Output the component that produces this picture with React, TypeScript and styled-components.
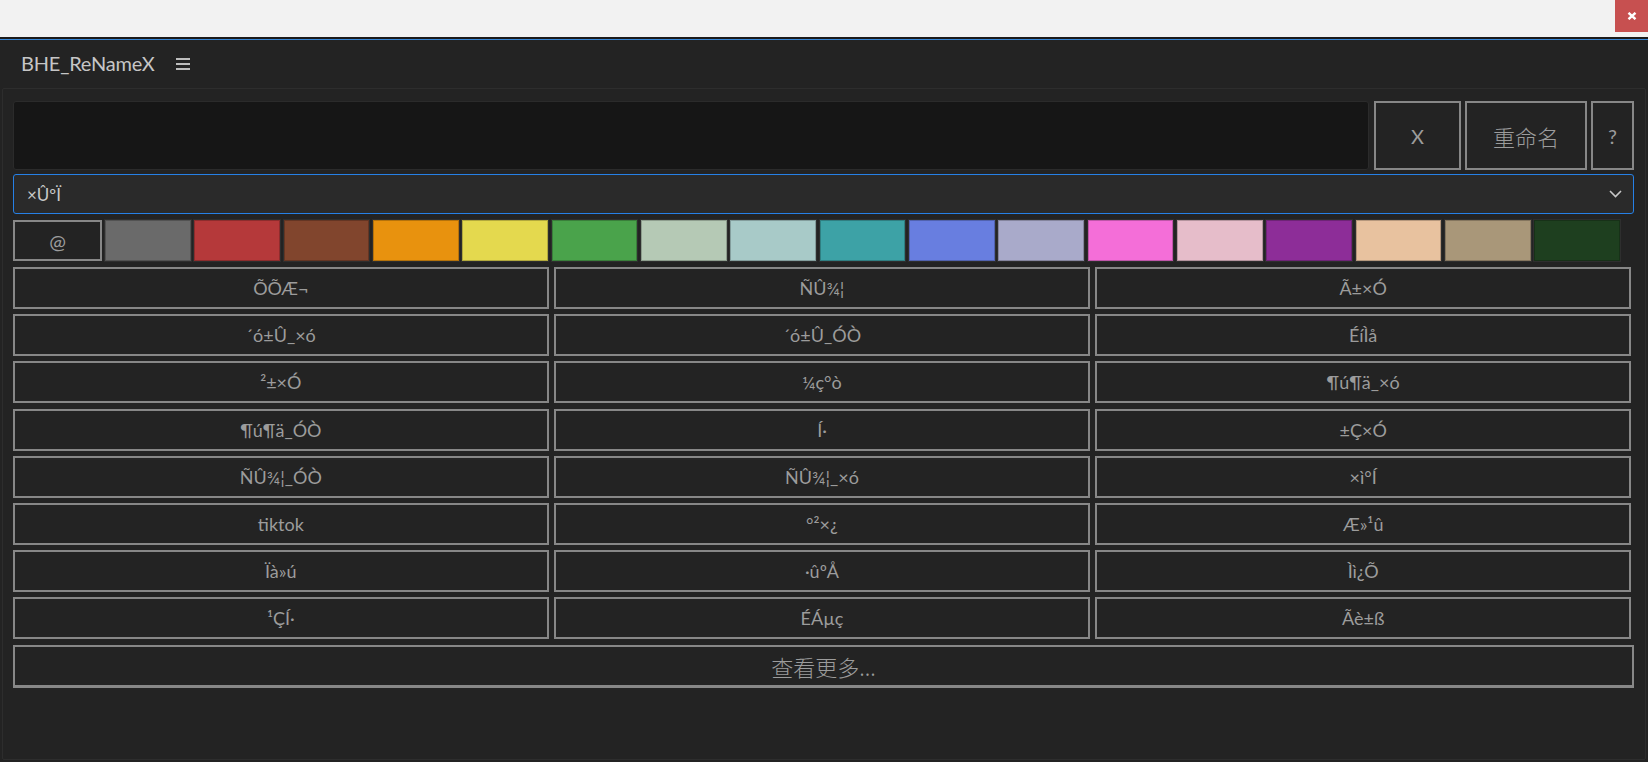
import styled, { createGlobalStyle } from "styled-components";

const GlobalStyle = createGlobalStyle`
  html, body {
    margin: 0;
    padding: 0;
    background: #232323;
  }
  body {
    font-family: Lato, "Noto Sans", "Noto Sans CJK SC", sans-serif;
  }
  * {
    box-sizing: border-box;
  }
`;

const Page = styled.div`
  display: flex;
  flex-direction: column;
  width: 1648px;
  height: 762px;
  overflow: hidden;
  background: #232323;
`;

const TitleBar = styled.div`
  display: flex;
  justify-content: flex-end;
  align-items: flex-start;
  height: 39px;
  background: #f2f2f2;
  border-bottom: 2px solid #1b1b1b;
  flex-shrink: 0;
`;

const CloseButton = styled.div`
  display: flex;
  align-items: center;
  justify-content: center;
  width: 33px;
  height: 32px;
  background: #c75050;
`;

const Header = styled.div`
  display: flex;
  align-items: center;
  gap: 22px;
  height: 49px;
  padding: 0 0 2px 21px;
  border-top: 1px solid #3a87d6;
  flex-shrink: 0;
`;

const Title = styled.span`
  font-size: 20px;
  color: #c6c6c6;
  letter-spacing: -0.2px;
`;

const Hamburger = styled.div`
  display: flex;
  flex-direction: column;
  gap: 3px;
  width: 14px;
  margin-top: 2px;

  span {
    display: block;
    height: 2px;
    background: #bdbdbd;
  }
`;

const Panel = styled.div`
  flex: 1;
  display: flex;
  flex-direction: column;
  margin: 0 2px 2px 2px;
  padding: 12px 11px 0 10px;
  border: 1px solid #2d2d2d;
  border-radius: 2px;
  background: #232323;
`;

const TopRow = styled.div`
  display: flex;
  gap: 4px;
  height: 69px;
`;

const NameInput = styled.div`
  flex: 1;
  margin-right: 1px;
  background: #161616;
  border: 1px solid #2b2b2b;
  border-radius: 3px;
`;

const ActionButton = styled.div<{ $w: number; $cjk?: boolean }>`
  display: flex;
  align-items: center;
  justify-content: center;
  width: ${(p) => p.$w}px;
  border: 2px solid #878787;
  color: #9c9c9c;
  font-size: ${(p) => (p.$cjk ? 22 : 20)}px;
  font-family: ${(p) =>
    p.$cjk ? `"Noto Sans CJK SC", sans-serif` : `Lato, "Noto Sans", sans-serif`};
  font-weight: ${(p) => (p.$cjk ? 300 : 400)};
`;

const SelectBox = styled.div`
  display: flex;
  align-items: center;
  justify-content: space-between;
  height: 40px;
  margin-top: 4px;
  padding: 0 11px 0 13px;
  background: #2a2a2a;
  border: 1px solid #2680e6;
  border-radius: 3px;
  color: #c8c8c8;
  font-size: 17px;
`;

const ColorRow = styled.div`
  display: flex;
  gap: 3.6px;
  height: 41px;
  margin-top: 6px;
  margin-right: 14px;
`;

const AtButton = styled.div`
  display: flex;
  align-items: center;
  justify-content: center;
  width: 89px;
  margin-right: -0.5px;
  border: 2px solid #878787;
  color: #9c9c9c;
  font-size: 20px;
`;

const Swatch = styled.div<{ $c: string }>`
  flex: 1;
  background: ${(p) => p.$c};
  border: 1px solid rgba(0, 0, 0, 0.22);
  box-shadow: 0 0 0 1px #2e2e2e;
`;

const Presets = styled.div`
  display: grid;
  grid-template-columns: repeat(3, 1fr);
  grid-auto-rows: 42px;
  column-gap: 5.5px;
  row-gap: 5.2px;
  margin-top: 6px;
  margin-right: 3px;
`;

const PresetButton = styled.div`
  display: flex;
  align-items: center;
  justify-content: center;
  border: 2px solid #878787;
  color: #9c9c9c;
  font-size: 18px;
  white-space: pre;
`;

const MoreButton = styled.div`
  display: flex;
  align-items: center;
  justify-content: center;
  height: 43px;
  margin-top: 5.2px;
  border: 2px solid #878787;
  border-bottom-width: 3px;
  color: #9c9c9c;
  font-family: "Noto Sans CJK SC", sans-serif;
  font-weight: 300;
  font-size: 22px;
`;

const swatches = [
  "#6a6a6a",
  "#b5393a",
  "#81452d",
  "#e8920e",
  "#e4d94e",
  "#4aa34b",
  "#b5c9b5",
  "#a8cac8",
  "#3da2a6",
  "#687ee0",
  "#a9aaca",
  "#f46ed8",
  "#e6bdca",
  "#8d2d98",
  "#e8c29f",
  "#a99779",
  "#1e3f1f",
];

const presets = [
  "ÕÕÆ¬", "ÑÛ¾¦", "Ã±×Ó",
  "´ó±Û_×ó", "´ó±Û_ÓÒ", "ÉíÌå",
  "²±×Ó", "¼ç°ò", "¶ú¶ä_×ó",
  "¶ú¶ä_ÓÒ", "Í·", "±Ç×Ó",
  "ÑÛ¾¦_ÓÒ", "ÑÛ¾¦_×ó", "×ì°Í",
  "tiktok", "°²×¿", "Æ»¹û",
  "Ïà»ú", "·ûºÅ", "Ìì¿Õ",
  "¹ÇÍ·", "ÉÁµç", "Ãè±ß",
];

export default function App() {
  return (
    <>
      <GlobalStyle />
      <Page>
        <TitleBar>
          <CloseButton>
            <svg width="10" height="8" viewBox="0 0 10 8">
              <path d="M1.5 0.8 L8.5 7.2 M8.5 0.8 L1.5 7.2" stroke="#fff" strokeWidth="2.4" />
            </svg>
          </CloseButton>
        </TitleBar>
        <Header>
          <Title>BHE_ReNameX</Title>
          <Hamburger>
            <span />
            <span />
            <span />
          </Hamburger>
        </Header>
        <Panel>
          <TopRow>
            <NameInput />
            <ActionButton $w={87}>X</ActionButton>
            <ActionButton $w={122} $cjk>重命名</ActionButton>
            <ActionButton $w={43}>?</ActionButton>
          </TopRow>
          <SelectBox>
            <span>×ÛºÏ</span>
            <svg width="13" height="8" viewBox="0 0 13 8">
              <path d="M1 1 L6.5 6.5 L12 1" fill="none" stroke="#c8c8c8" strokeWidth="1.6" />
            </svg>
          </SelectBox>
          <ColorRow>
            <AtButton>@</AtButton>
            {swatches.map((c) => (
              <Swatch key={c} $c={c} />
            ))}
          </ColorRow>
          <Presets>
            {presets.map((t, i) => (
              <PresetButton key={i}>{t}</PresetButton>
            ))}
          </Presets>
          <MoreButton>查看更多...</MoreButton>
        </Panel>
      </Page>
    </>
  );
}
